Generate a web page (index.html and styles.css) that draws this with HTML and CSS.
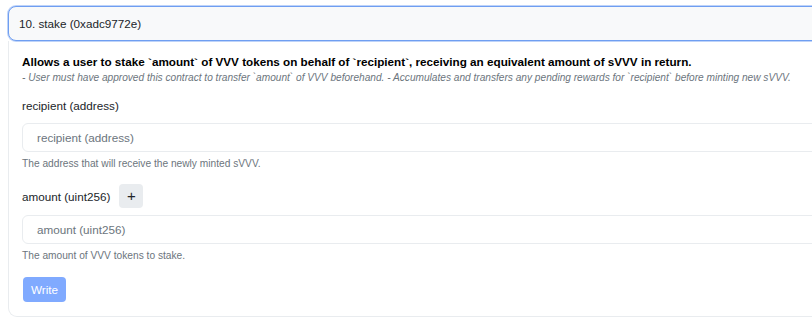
FILE: index.html
```html
<!DOCTYPE html>
<html>
<head>
<meta charset="utf-8">
<link rel="stylesheet" href="styles.css">
</head>
<body>
<div class="page">
  <div class="card">
    <div class="card-header">10. stake (0xadc9772e)</div>
    <div class="card-body">
      <p class="desc">Allows a user to stake `amount` of VVV tokens on behalf of `recipient`, receiving an equivalent amount of sVVV in return.</p>
      <p class="note">- User must have approved this contract to transfer `amount` of VVV beforehand. - Accumulates and transfers any pending rewards for `recipient` before minting new sVVV.</p>

      <div class="field">
        <div class="label-row"><label class="label">recipient (address)</label></div>
        <input class="input" type="text" placeholder="recipient (address)">
        <div class="help">The address that will receive the newly minted sVVV.</div>
      </div>

      <div class="field">
        <div class="label-row"><label class="label">amount (uint256)</label><button class="plus" type="button">+</button></div>
        <input class="input" type="text" placeholder="amount (uint256)">
        <div class="help">The amount of VVV tokens to stake.</div>
      </div>

      <button class="write" type="button">Write</button>
    </div>
  </div>
</div>
</body>
</html>
```
FILE: styles.css
```css
html, body {
  margin: 0;
  padding: 0;
  background: #ffffff;
  overflow: hidden;
}
body {
  font-family: "Liberation Sans", Arial, Helvetica, sans-serif;
  color: #212529;
}
.page {
  padding: 6px 0 0 8px;
  width: 1000px;
}
.card {
  width: 1000px;
}
.card-header {
  background: #f8f9fa;
  border: 1px solid #6f9ef1;
  box-shadow: 0 0 0 1px rgba(111, 158, 241, 0.45);
  border-radius: 8px 0 0 8px;
  padding: 9px 10px 9px 10px;
  font-size: 11.7px;
  line-height: 15px;
  color: #212529;
}
.card-body {
  border: 1px solid #e9ecef;
  border-top: none;
  border-radius: 0 0 0 9px;
  padding: 13px 13px 14px 13px;
}
.desc {
  margin: 0;
  font-size: 11.7px;
  font-weight: bold;
  line-height: 16px;
  color: #000;
}
.note {
  margin: 1px 0 0 0;
  font-size: 10.15px;
  font-style: italic;
  color: #6c757d;
  line-height: 14px;
}
.field {
  margin-top: 8px;
}
.field + .field {
  margin-top: 13px;
}
.label-row {
  display: flex;
  align-items: center;
  gap: 9px;
  min-height: 24px;
}
.label {
  font-size: 11.7px;
  color: #212529;
}
.plus {
  width: 24px;
  height: 24px;
  border: none;
  border-radius: 4px;
  background: #e9ecef;
  color: #212529;
  font-family: "Liberation Sans", Arial, sans-serif;
  font-size: 15px;
  line-height: 20px;
  padding: 0;
}
.input {
  display: block;
  box-sizing: border-box;
  width: 1000px;
  height: 29px;
  margin-top: 6px;
  border: 1px solid #e9ecef;
  border-radius: 6px;
  padding: 0 14px;
  font-family: "Liberation Sans", Arial, sans-serif;
  font-size: 11.7px;
  color: #212529;
  outline: none;
}
.field + .field .input {
  margin-top: 7px;
}
.input::placeholder {
  color: #6c757d;
}
.help {
  margin-top: 5px;
  font-size: 10.2px;
  line-height: 14px;
  color: #6c757d;
}
.write {
  margin-top: 14px;
  margin-left: 1px;
  height: 25px;
  padding: 0 8px;
  border: none;
  border-radius: 4px;
  background: #80aaff;
  color: #fff;
  font-family: "Liberation Sans", Arial, sans-serif;
  font-size: 11.7px;
  font-weight: normal;
}
```
